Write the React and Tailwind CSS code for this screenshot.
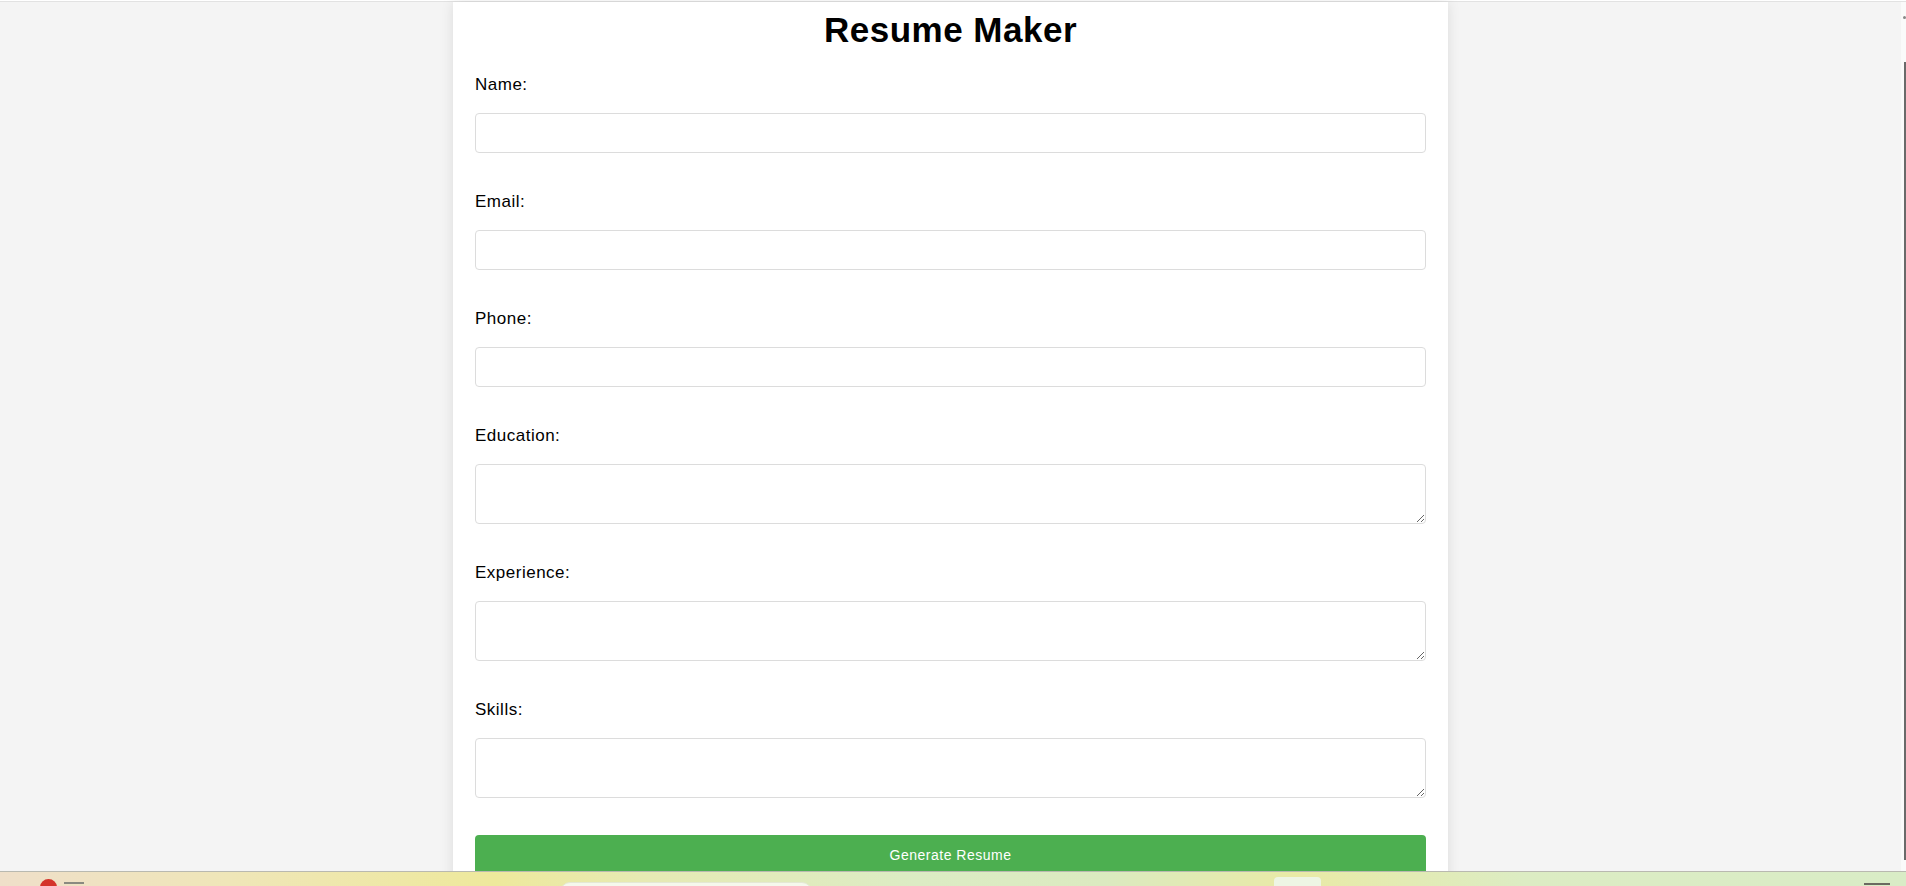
import React, { useState } from "react";

const fields = [
  { name: "name", label: "Name:", type: "text" },
  { name: "email", label: "Email:", type: "email" },
  { name: "phone", label: "Phone:", type: "tel" },
  { name: "education", label: "Education:", multiline: true },
  { name: "experience", label: "Experience:", multiline: true },
  { name: "skills", label: "Skills:", multiline: true },
];

// bottom strip of the desktop taskbar that peeks into the screenshot
const Taskbar = () => (
  <div className="fixed bottom-0 left-0 right-0 flex h-[15px] items-start overflow-hidden border-t border-[#b9b9b0] bg-[linear-gradient(90deg,#efdfc9_0%,#efe6b8_12%,#eee99c_26%,#e6eab4_34%,#dcecc4_48%,#dbeac0_58%,#e9eaa6_68%,#dcecc3_80%,#d9ecc6_100%)] pl-[40px] pr-[16px]">
    <div className="flex items-start gap-[7px] pt-[7px]">
      <div className="h-[17px] w-[17px] rounded-full bg-[#d4332b]" />
      <div className="mt-[3px] h-[2px] w-[20px] bg-[#8a8a80]" />
    </div>
    <div className="ml-[476px] flex items-start gap-[462px]">
      <div className="mt-[10px] h-[20px] w-[252px] rounded-[10px] border border-[#e4e8d4] bg-[#f5f8ec]" />
      <div className="mt-[5px] h-[20px] w-[47px] rounded-[4px] bg-[#eef5e4]" />
    </div>
    <div className="ml-auto mt-[11px] h-[2px] w-[26px] bg-[#6a6a60]" />
  </div>
);

const ScrollStrip = () => (
  <div className="flex h-full w-[5px] shrink-0 flex-col items-end bg-[#fafafa] pb-[26px] pt-[14px]">
    <div className="h-[3px] w-[3px] rounded-full bg-[#888]" />
    <div className="mt-[43px] w-[2px] flex-1 bg-[#6a6a6a]" />
  </div>
);

export default function App() {
  const [form, setForm] = useState({
    name: "",
    email: "",
    phone: "",
    education: "",
    experience: "",
    skills: "",
  });

  const handleChange = (e) => {
    setForm({ ...form, [e.target.name]: e.target.value });
  };

  return (
    <div className="h-[886px] overflow-hidden bg-[#f4f4f4] font-['Liberation_Sans',Arial,sans-serif] text-black">
      <div className="h-px bg-white" />
      <div className="h-px bg-[#e2e2e2]" />
      <div className="flex h-[884px]">
        <div className="flex flex-1 justify-center">
          <div className="h-full w-[995px] bg-white px-[22px] pt-[9px] shadow-[0_0_12px_rgba(0,0,0,0.1)]">
            <h1 className="text-center text-[35px] font-bold leading-[38px] tracking-[0.5px]">Resume Maker</h1>

            <form className="mt-[27px] flex flex-col" onSubmit={(e) => e.preventDefault()}>
              {fields.map((f) => (
                <div key={f.name} className="mb-[40px] last-of-type:mb-[37px]">
                  <label htmlFor={f.name} className="block text-[17px] leading-[18px] tracking-[0.5px]">
                    {f.label}
                  </label>
                  {f.multiline ? (
                    <textarea
                      id={f.name}
                      name={f.name}
                      value={form[f.name]}
                      onChange={handleChange}
                      className="mt-[19px] block h-[60px] w-full resize rounded-[4px] border border-[#dcdcdc] bg-white p-[10px] text-[16px] outline-none"
                    />
                  ) : (
                    <input
                      id={f.name}
                      name={f.name}
                      type={f.type}
                      value={form[f.name]}
                      onChange={handleChange}
                      className="mt-[19px] block h-[40px] w-full rounded-[4px] border border-[#dcdcdc] bg-white px-[10px] text-[16px] outline-none"
                    />
                  )}
                </div>
              ))}

              <button
                type="submit"
                className="block h-[40px] w-full rounded-[4px] bg-[#4caf50] text-[14px] tracking-[0.5px] text-white"
              >
                Generate Resume
              </button>
            </form>
          </div>
        </div>
        <ScrollStrip />
      </div>
      <Taskbar />
    </div>
  );
}
